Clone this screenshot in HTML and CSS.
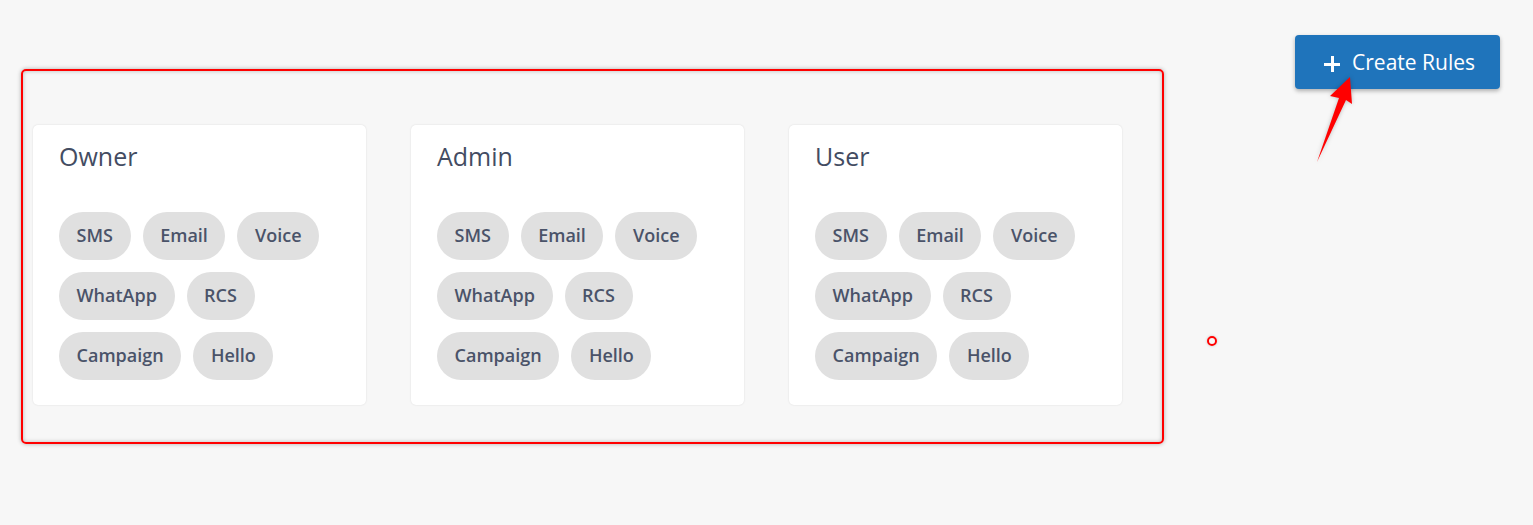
FILE: index.html
```html
<!DOCTYPE html>
<html lang="en">
<head>
<meta charset="utf-8">
<title>Rules</title>
<link rel="stylesheet" href="styles.css">
</head>
<body>
<div class="page">
  <div class="toolbar">
    <button class="btn-create"><span class="plus" aria-hidden="true"></span><span>Create Rules</span></button>
  </div>
  <div class="roles">
    <section class="card">
      <h2 class="card-title">Owner</h2>
      <ul class="pills">
        <li class="pill">SMS</li><li class="pill">Email</li><li class="pill">Voice</li>
        <li class="pill">WhatApp</li><li class="pill">RCS</li>
        <li class="pill">Campaign</li><li class="pill">Hello</li>
      </ul>
    </section>
    <section class="card">
      <h2 class="card-title">Admin</h2>
      <ul class="pills">
        <li class="pill">SMS</li><li class="pill">Email</li><li class="pill">Voice</li>
        <li class="pill">WhatApp</li><li class="pill">RCS</li>
        <li class="pill">Campaign</li><li class="pill">Hello</li>
      </ul>
    </section>
    <section class="card">
      <h2 class="card-title">User</h2>
      <ul class="pills">
        <li class="pill">SMS</li><li class="pill">Email</li><li class="pill">Voice</li>
        <li class="pill">WhatApp</li><li class="pill">RCS</li>
        <li class="pill">Campaign</li><li class="pill">Hello</li>
      </ul>
    </section>
  </div>

  <div class="annot-box"></div>
  <div class="annot-dot"></div>
  <svg class="annot-arrow" width="60" height="100" viewBox="1300 70 60 100" aria-hidden="true">
    <polygon points="1317,162 1339,98 1330,96 1350,77 1352,104 1346,100" fill="#ff0000"/>
  </svg>
</div>
</body>
</html>
```

FILE: styles.css
```css
* { box-sizing: border-box; }

html, body {
  margin: 0;
  padding: 0;
  background: #f7f7f7;
}

body {
  font-family: "Open Sans", "Noto Sans", "Liberation Sans", sans-serif;
  color: #434c62;
}

.page {
  position: relative;
  width: 1533px;
  height: 525px;
}

.toolbar {
  display: flex;
  justify-content: flex-end;
  padding: 35px 33px 0 0;
}

.btn-create {
  display: flex;
  align-items: center;
  gap: 12px;
  height: 54px;
  padding: 0 25px 0 29px;
  border: none;
  border-radius: 4px;
  background: #1f74bb;
  color: #ffffff;
  font-family: inherit;
  font-size: 21px;
  font-weight: 400;
  box-shadow: 0 2px 4px rgba(0, 0, 0, 0.3);
}

.plus {
  position: relative;
  width: 16px;
  height: 16px;
  margin-top: 3px;
}
.plus::before,
.plus::after {
  content: "";
  position: absolute;
  background: #ffffff;
}
.plus::before { left: 0; right: 0; top: 7px; height: 3px; }
.plus::after { top: 0; bottom: 0; left: 6.5px; width: 3px; }

.roles {
  display: flex;
  gap: 45px;
  margin-top: 36px;
  padding-left: 33px;
}

.card {
  width: 333px;
  height: 280px;
  padding: 14px 26px 25px;
  background: #ffffff;
  border-radius: 5px;
  box-shadow: 0 0 2px rgba(0, 0, 0, 0.12);
}

.card-title {
  margin: 0 0 39px;
  font-size: 25px;
  line-height: 34px;
  font-weight: 400;
  color: #434c62;
}

.pills {
  list-style: none;
  margin: 0;
  padding: 0;
  display: flex;
  flex-wrap: wrap;
  gap: 12px;
}

.pill {
  height: 48px;
  display: flex;
  align-items: center;
  padding: 0 17.6px 2px;
  border-radius: 24px;
  background: #e0e0e0;
  font-size: 18px;
  font-weight: 600;
  color: #4a5369;
}

.annot-box {
  position: absolute;
  left: 21px;
  top: 69px;
  width: 1143px;
  height: 375px;
  border: 2px solid #ff0000;
  border-radius: 5px;
  box-shadow: 0 0 4px rgba(0, 0, 0, 0.3), inset 0 0 4px rgba(0, 0, 0, 0.25);
}

.annot-dot {
  position: absolute;
  left: 1207px;
  top: 336px;
  width: 10px;
  height: 10px;
  border: 2px solid #ff0000;
  border-radius: 50%;
  box-shadow: 0 0 3px rgba(0, 0, 0, 0.2);
}

.annot-arrow {
  position: absolute;
  left: 1300px;
  top: 70px;
  filter: drop-shadow(0 0 2px rgba(0, 0, 0, 0.25));
}
```
